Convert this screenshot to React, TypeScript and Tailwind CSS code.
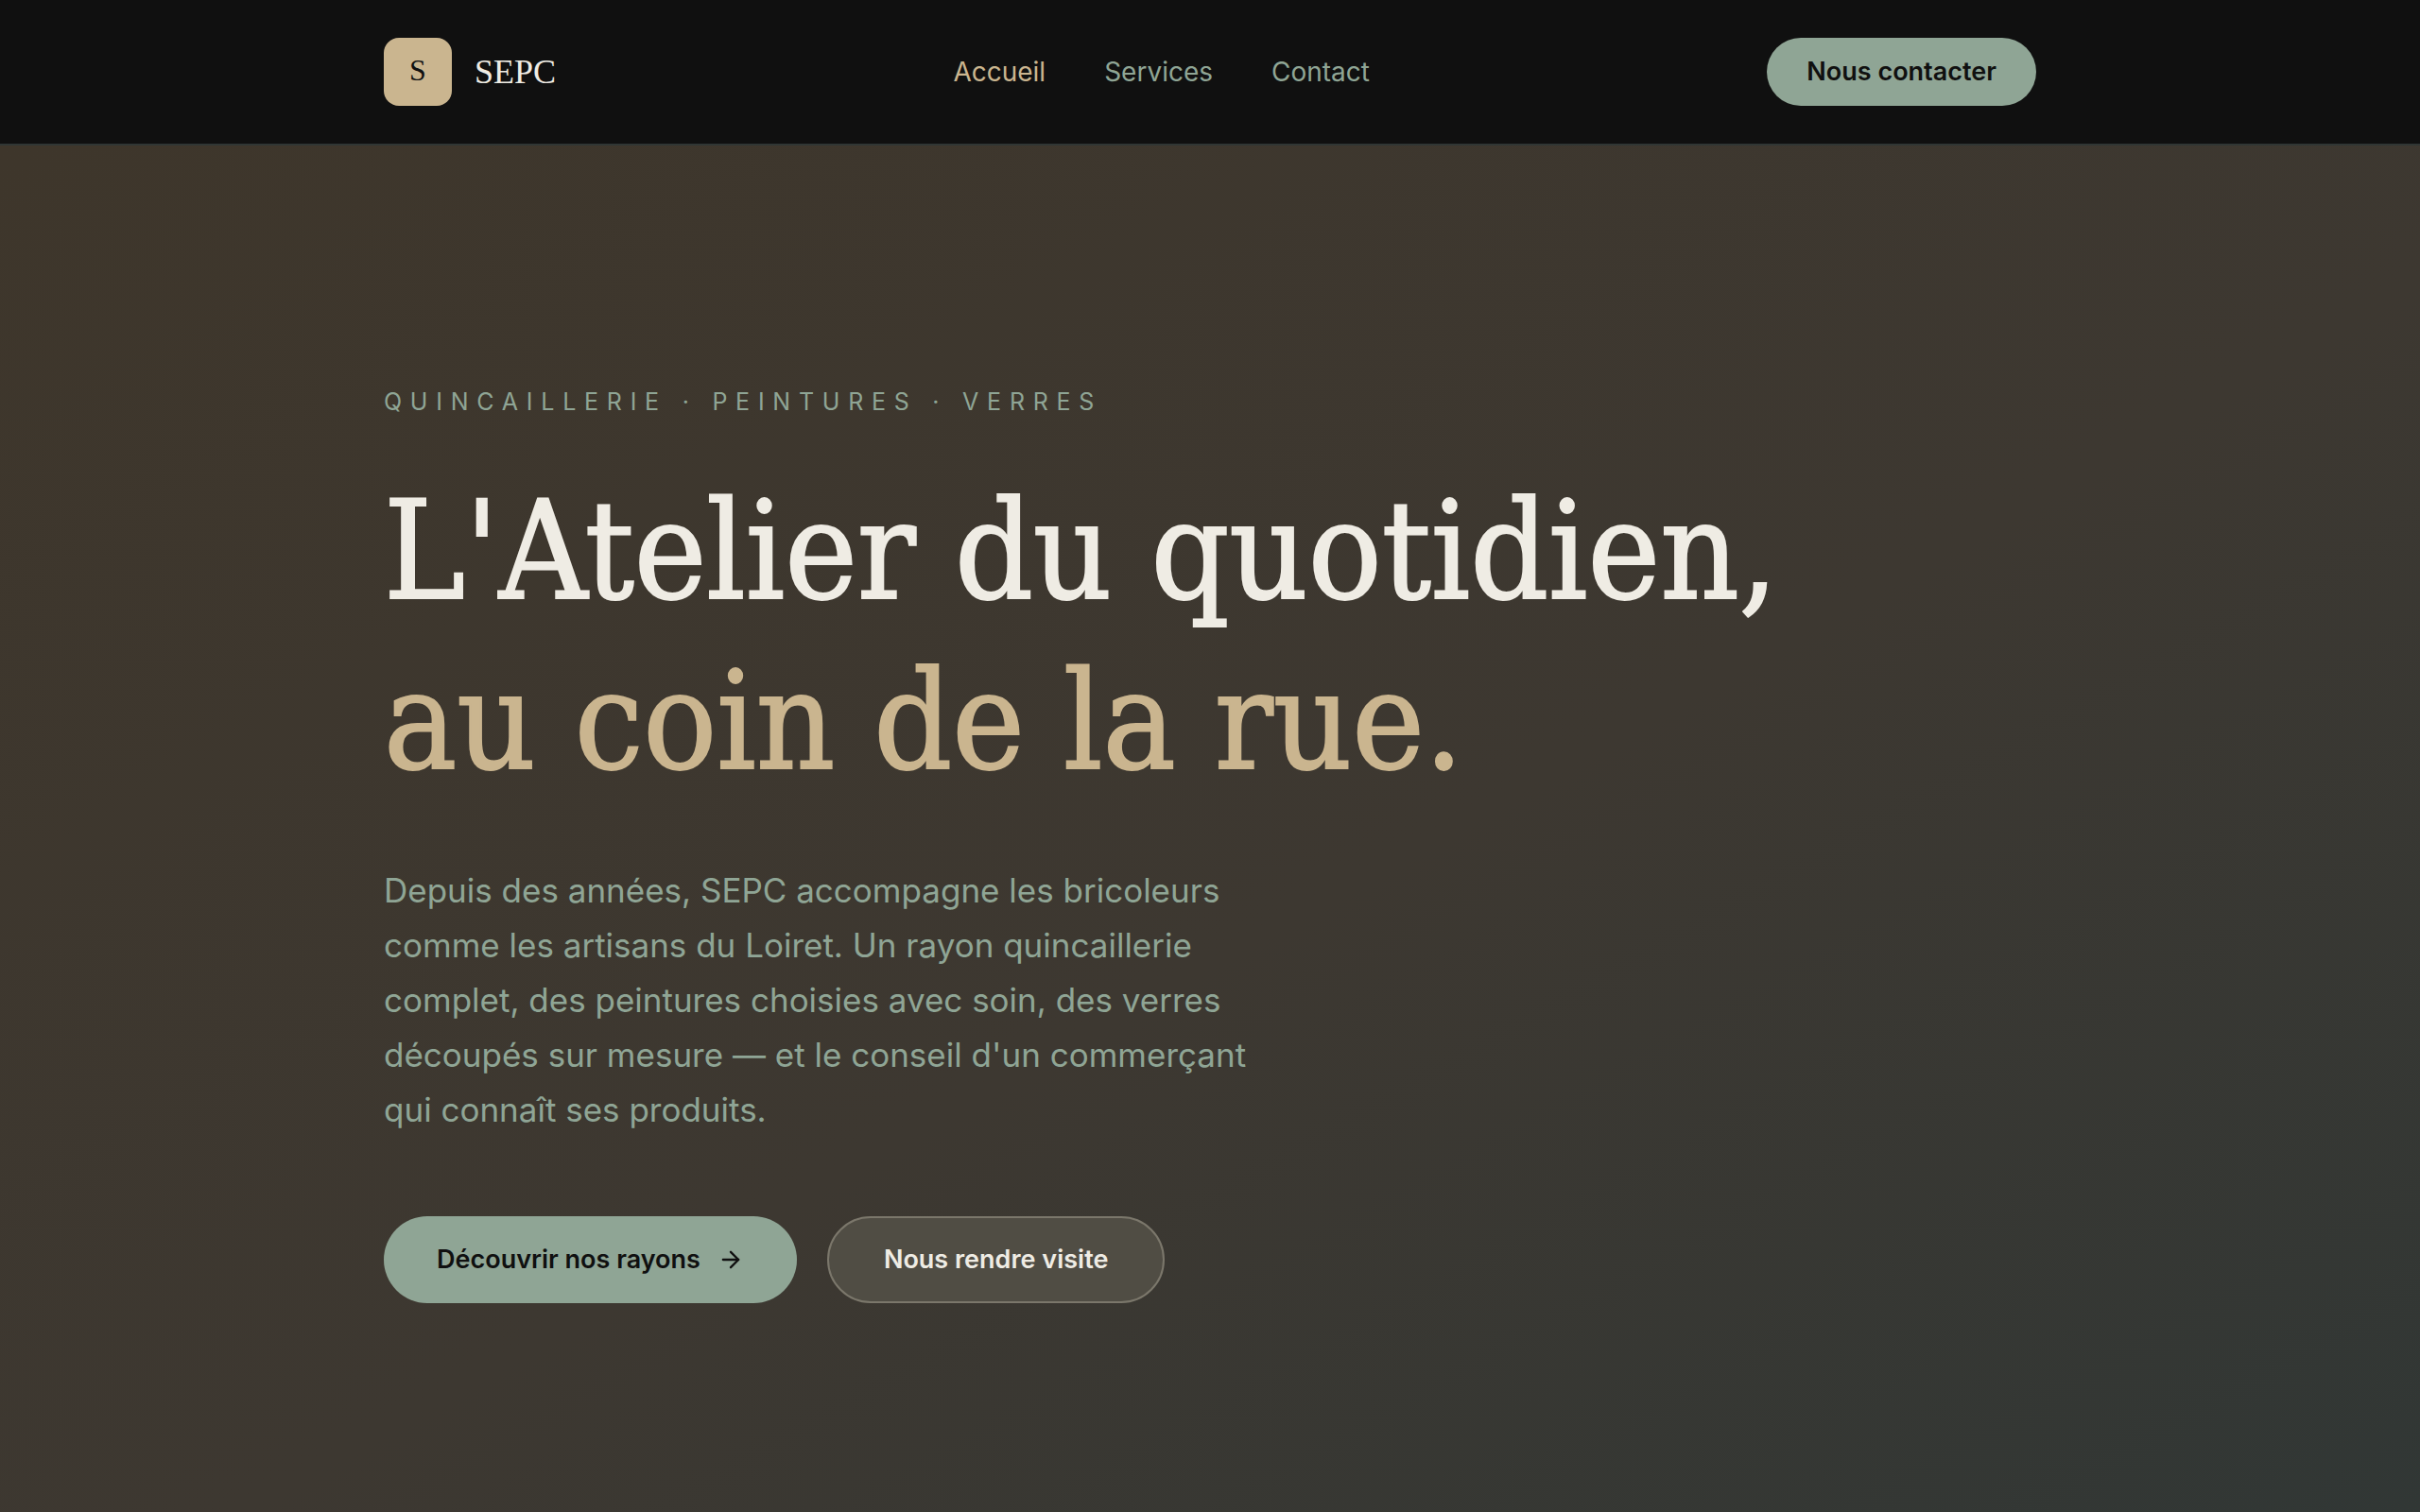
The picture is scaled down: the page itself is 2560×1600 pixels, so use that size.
import { ArrowRight } from 'lucide-react';

interface NavItem {
  label: string;
  href: string;
  active?: boolean;
}

const navItems: NavItem[] = [
  { label: 'Accueil', href: '#accueil', active: true },
  { label: 'Services', href: '#services' },
  { label: 'Contact', href: '#contact' },
];

const Header = () => (
  <header className="border-b-2 border-[#303634] bg-[#101010]">
    <div className="mx-auto flex w-full max-w-[1748px] items-center justify-between py-10">
      <a href="#accueil" className="flex items-center gap-6">
        <span className="flex size-18 items-center justify-center rounded-2xl bg-[#cab58f] pb-1 font-['Liberation_Serif',serif] text-[32px] text-[#101010]">
          S
        </span>
        <span className="font-['Liberation_Serif',serif] text-4xl text-[#efece4]">SEPC</span>
      </a>
      <nav className="flex items-center gap-[62px]">
        {navItems.map(item => (
          <a
            key={item.label}
            href={item.href}
            className={item.active ? 'text-[28px] text-[#cab58f]' : 'text-[28px] text-[#8fa595]'}
          >
            {item.label}
          </a>
        ))}
      </nav>
      <button
        type="button"
        className="h-18 rounded-full bg-[#8fa595] px-[42px] text-[27px] font-semibold text-[#101010]"
      >
        Nous contacter
      </button>
    </div>
  </header>
);

const Hero = () => (
  <section className="flex grow flex-col justify-center bg-linear-to-br from-[#3e362b] via-[#3d3831] via-55% to-[#313735] pt-8">
    <div className="mx-auto w-full max-w-[1748px]">
      <p className="text-[25px] tracking-[0.35em] text-[#8fa595] uppercase">Quincaillerie · Peintures · Verres</p>
      <h1 className="mt-12 font-['DejaVu_Serif_Condensed','DejaVu_Serif',serif] text-[144px] leading-[180px] text-[#efece4] [-webkit-text-stroke:2px_currentColor]">
        L'Atelier du quotidien,
        <span className="block text-[#cab58f]">au coin de la rue.</span>
      </h1>
      <p className="mt-15 max-w-[936px] text-[35px] leading-[58px] text-[#8fa595]">
        Depuis des années, SEPC accompagne les bricoleurs comme les artisans du Loiret. Un rayon quincaillerie
        complet, des peintures choisies avec soin, des verres découpés sur mesure — et le conseil d'un commerçant
        qui connaît ses produits.
      </p>
      <div className="mt-21 flex items-center gap-8">
        <button
          type="button"
          className="flex h-23 items-center gap-[18px] rounded-full bg-[#8fa595] px-14 text-[27px] font-semibold text-[#101010]"
        >
          Découvrir nos rayons
          <ArrowRight className="size-7" strokeWidth={2} />
        </button>
        <button
          type="button"
          className="h-23 rounded-full border-2 border-[#7b776b] bg-[#504d44] px-[58px] text-[27px] font-semibold text-[#efece4]"
        >
          Nous rendre visite
        </button>
      </div>
    </div>
  </section>
);

const App = () => (
  <div className="flex min-h-screen flex-col font-['Inter',sans-serif]">
    <Header />
    <Hero />
  </div>
);

export default App;
